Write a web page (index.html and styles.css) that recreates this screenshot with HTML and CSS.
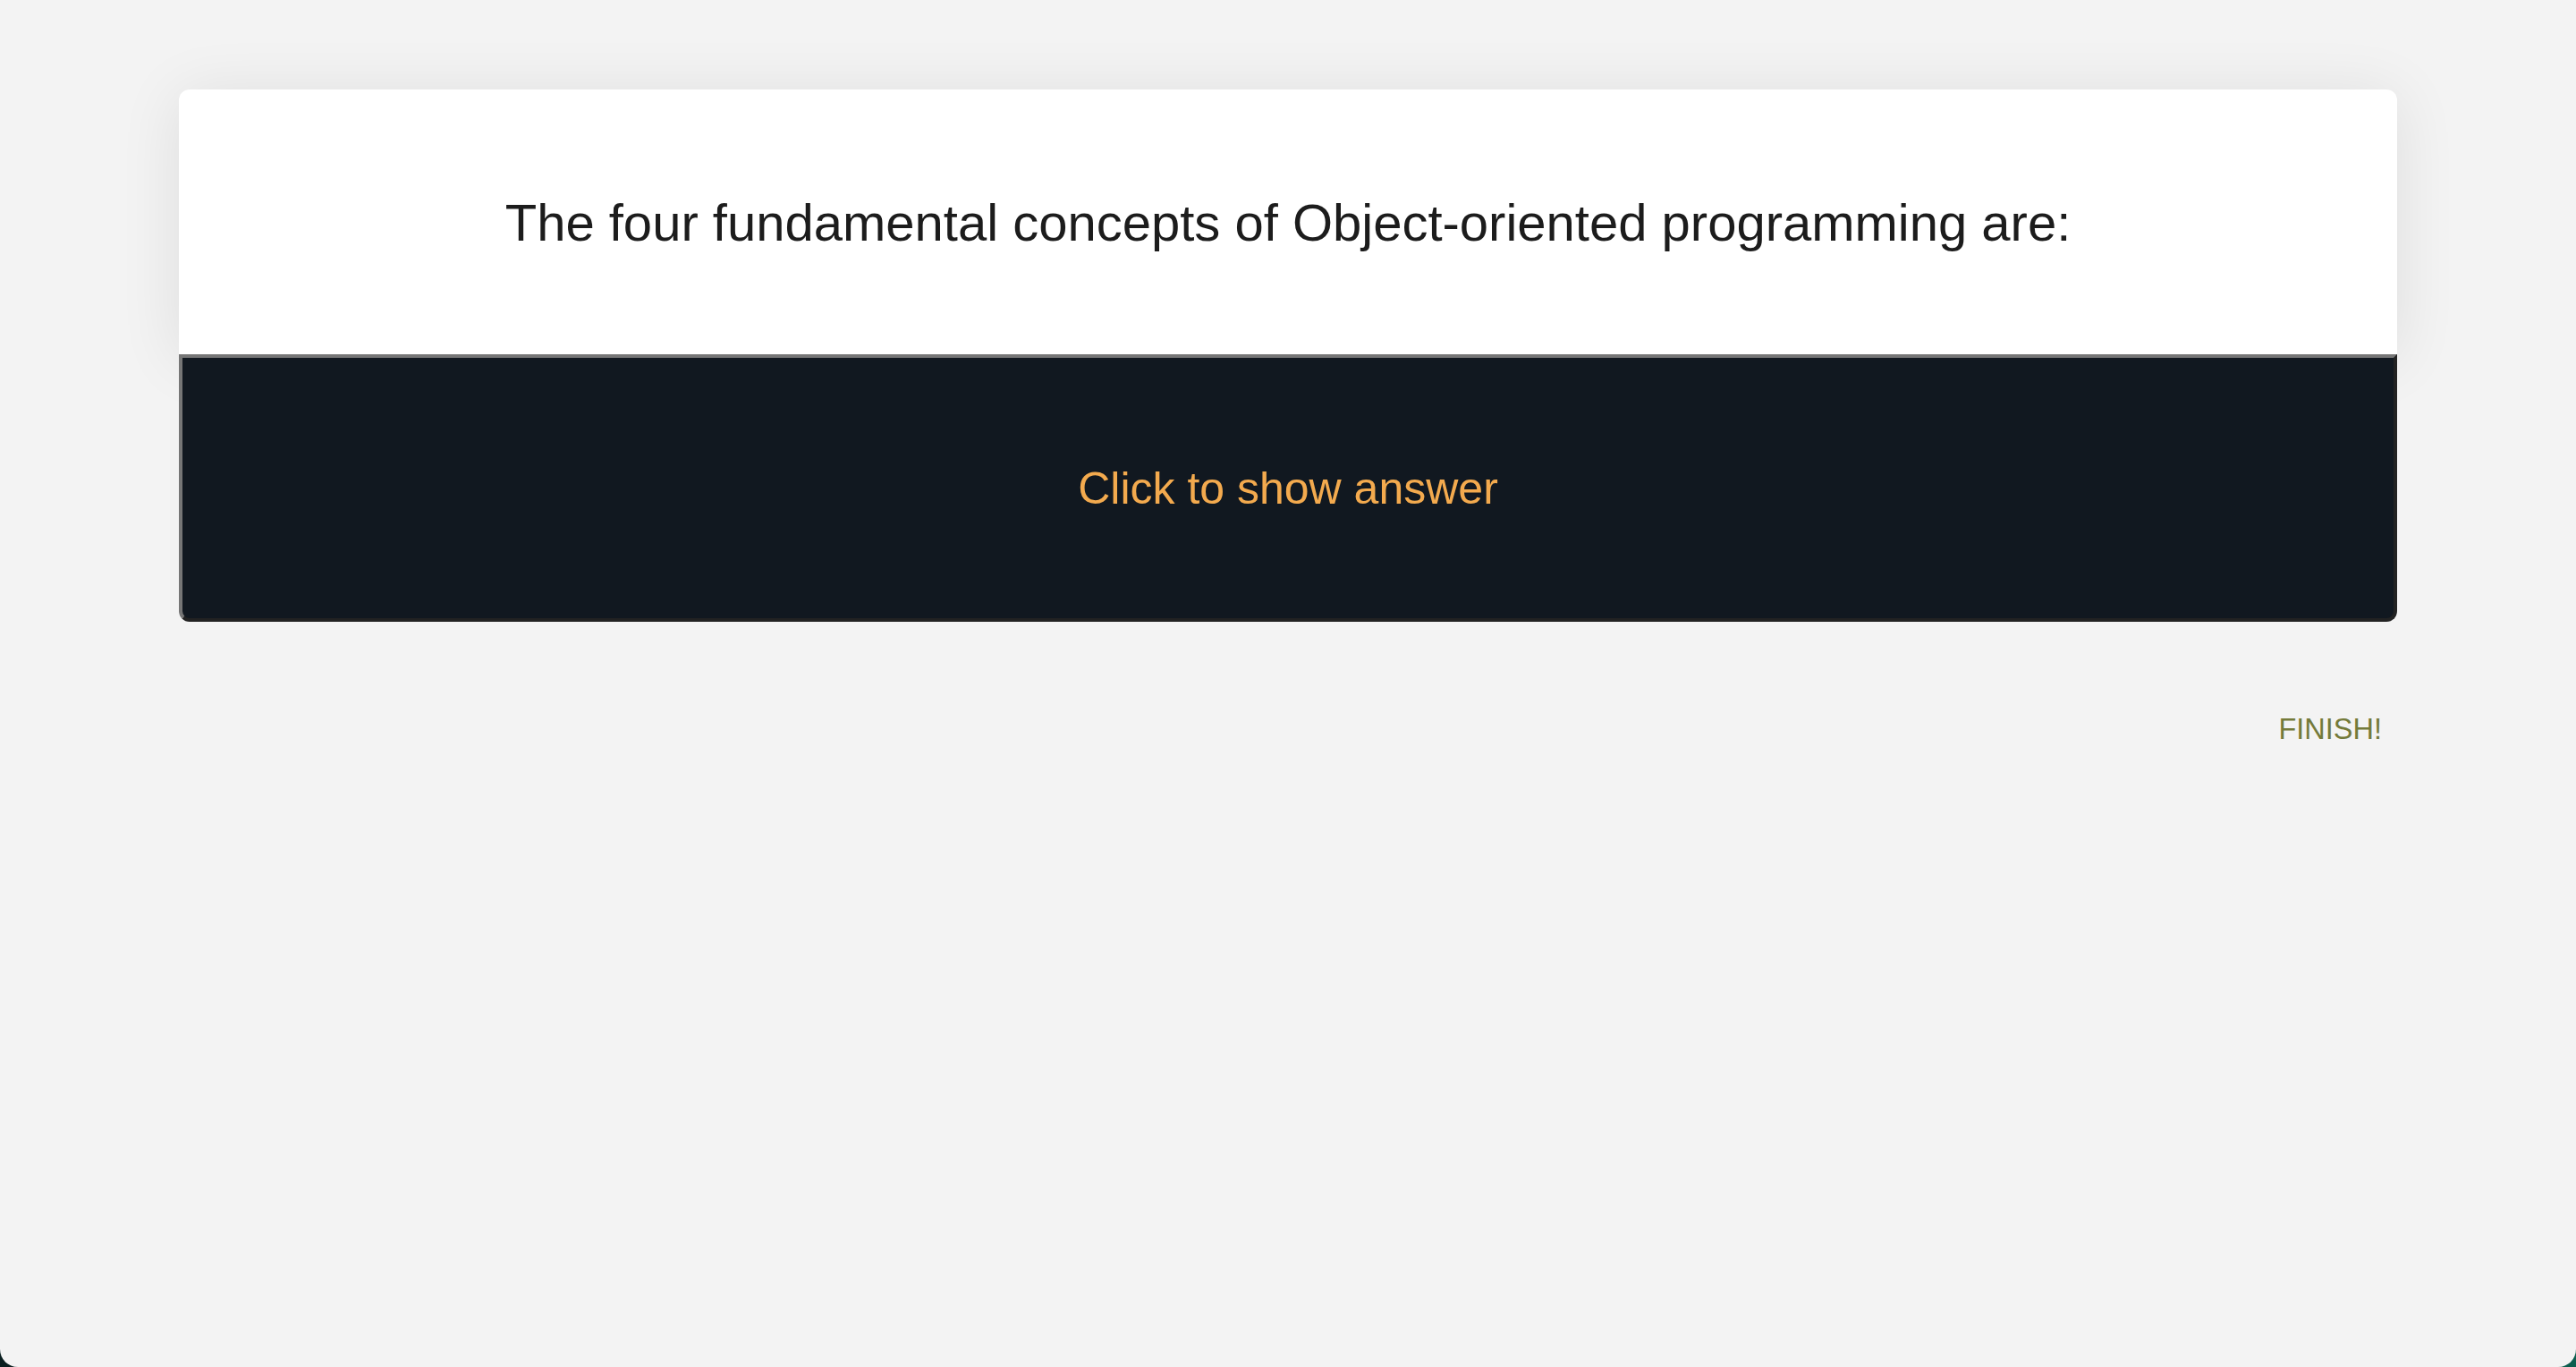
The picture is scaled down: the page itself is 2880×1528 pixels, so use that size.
FILE: index.html
```html
<!DOCTYPE html>
<html>
<head>
<meta charset="utf-8">
<link rel="stylesheet" href="styles.css">
</head>
<body>
<div class="page">
  <div class="card">
    <div class="question">The four fundamental concepts of Object-oriented programming are:</div>
    <button class="answer">Click to show answer</button>
  </div>
  <div class="actions">
    <button class="finish">FINISH!</button>
  </div>
</div>
</body>
</html>
```
FILE: styles.css
```css
html {
  background: linear-gradient(90deg, #0a1f20 0%, #0b3a36 50%, #0c5e4e 100%);
}
body {
  margin: 0;
  font-family: "Liberation Sans", Arial, sans-serif;
}
.page {
  height: 1528px;
  box-sizing: border-box;
  background: #f3f3f3;
  border-radius: 0 0 20px 20px;
  padding: 100px 200px 0;
}
.card {
  display: flex;
  flex-direction: column;
}
.question {
  height: 296px;
  background: #ffffff;
  border-radius: 12px 12px 0 0;
  display: flex;
  align-items: center;
  justify-content: center;
  font-size: 58px;
  color: #1c1c1c;
  box-shadow: 0 6px 70px rgba(0, 0, 0, 0.09);
}
.answer {
  position: relative;
  z-index: 1;
  height: 299px;
  box-sizing: border-box;
  margin: 0;
  padding: 0;
  background: #111820;
  border-width: 4px;
  border-style: solid;
  border-color: #767676 #222222 #222222 #767676;
  border-radius: 0 0 12px 12px;
  font-family: "Liberation Sans", Arial, sans-serif;
  font-size: 50px;
  color: #f3aa4e;
  cursor: pointer;
}
.actions {
  display: flex;
  justify-content: flex-end;
  padding: 102px 17px 0 0;
}
.finish {
  background: none;
  border: none;
  padding: 0;
  font-family: "Liberation Sans", Arial, sans-serif;
  font-size: 32.5px;
  color: #747a3a;
  cursor: pointer;
}
```
